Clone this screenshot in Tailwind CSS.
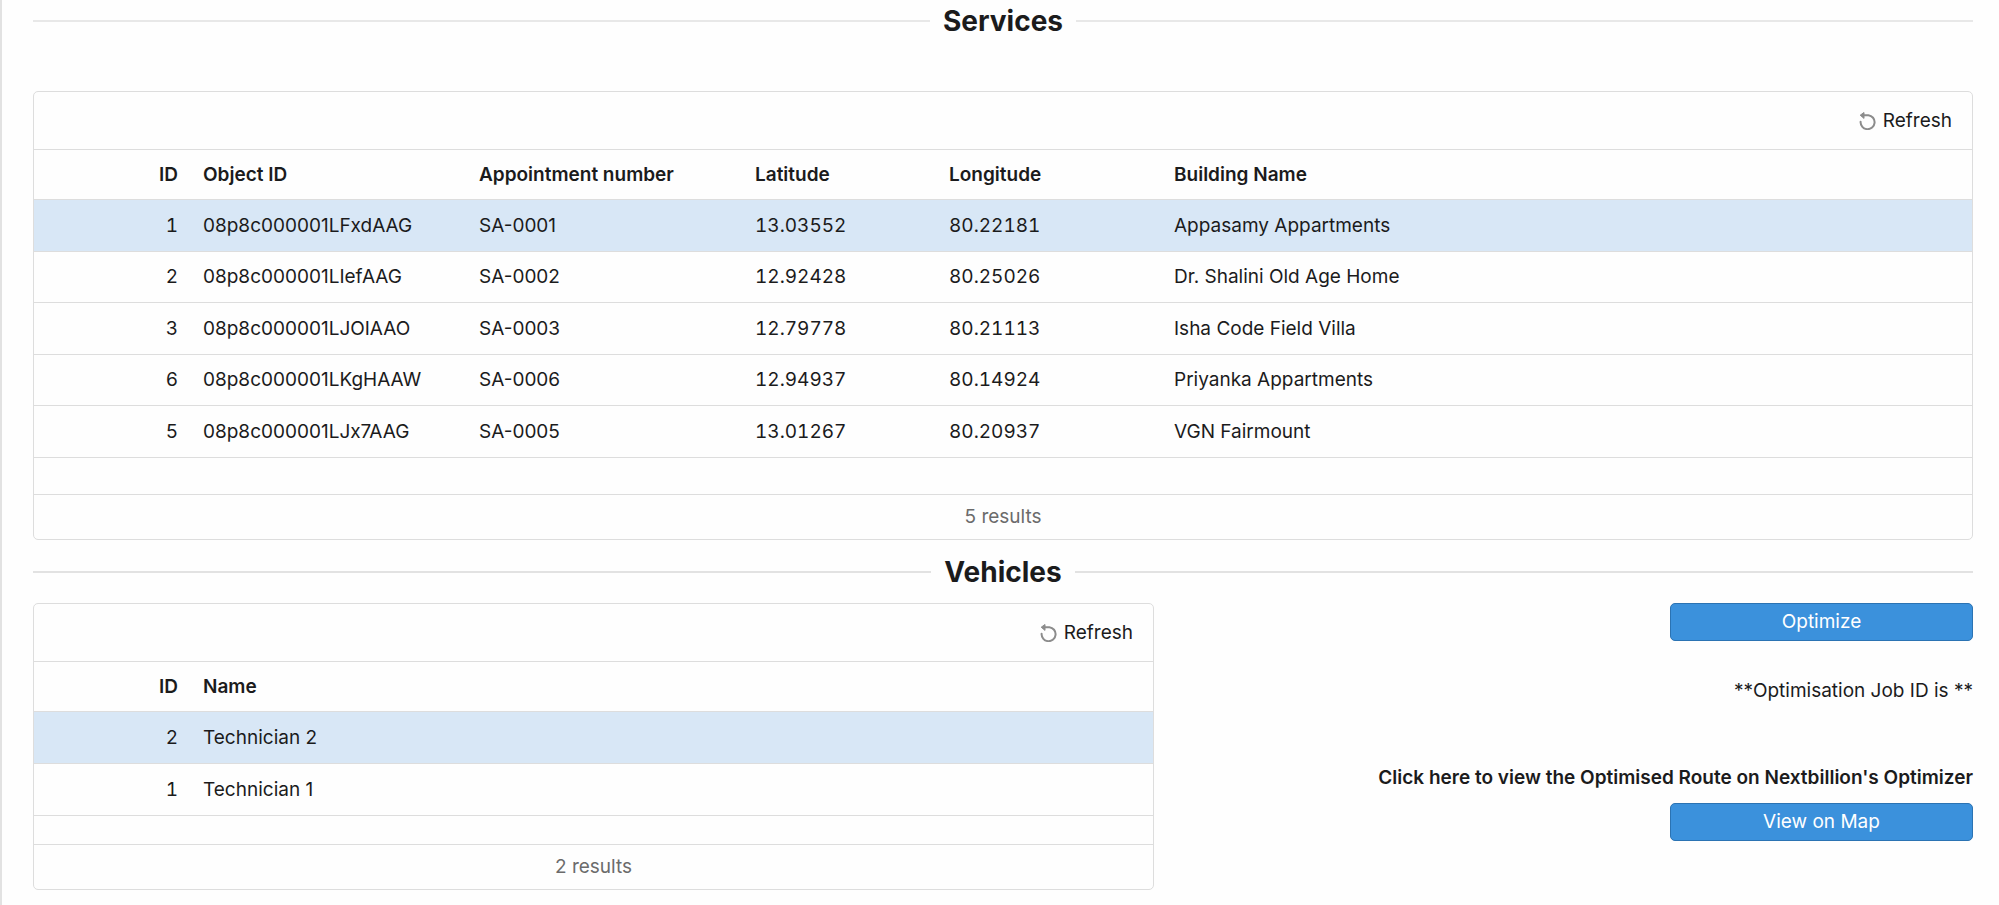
<!DOCTYPE html>
<html lang="en">
<head>
<meta charset="utf-8">
<title>Services and Vehicles</title>
<script src="https://cdn.jsdelivr.net/npm/@tailwindcss/browser@4"></script>
</head>
<body class="min-h-screen border-l-2 border-[#e2e2e2] bg-[#fefefe] pr-[26px] pl-[31px] font-['Inter',sans-serif] text-[19px] leading-6 text-[#1b1b1c]">
<main>
  <div class="flex h-[42px] items-center gap-[13px]">
    <div class="h-0.5 flex-1 bg-[#e8e8e8]"></div>
    <h2 class="text-[28px] leading-8 font-bold">Services</h2>
    <div class="h-0.5 flex-1 bg-[#e8e8e8]"></div>
  </div>

  <section aria-label="Services" class="mt-[49px] overflow-hidden rounded-[5px] border border-[#dddddd]">
    <div class="flex h-[57px] items-center justify-end px-5">
      <button type="button" class="flex items-center gap-1.5">
        <svg class="size-[18px] text-[#8c8c8c]" viewBox="0 0 18 18" fill="none" aria-hidden="true"><path d="M4.2 3.2H9.4A7 7 0 1 1 1.6 9.8" stroke="currentColor" stroke-width="2" stroke-linecap="round"/><path d="M1.2 3.2 5 .5V6.4Z" fill="currentColor" stroke="currentColor" stroke-linejoin="round"/></svg>
        Refresh
      </button>
    </div>
    <table class="w-full table-fixed border-y border-[#dddddd] text-left">
      <colgroup><col class="w-[156px]"><col class="w-[276px]"><col class="w-[276px]"><col class="w-[194px]"><col class="w-[225px]"><col></colgroup>
      <thead>
        <tr class="h-[50px] border-b border-[#dddddd]"><th class="px-3 text-right font-semibold">ID</th><th class="px-[13px] font-semibold">Object ID</th><th class="px-[13px] font-semibold">Appointment number</th><th class="px-[13px] font-semibold">Latitude</th><th class="px-[13px] font-semibold">Longitude</th><th class="px-[13px] font-semibold">Building Name</th></tr>
      </thead>
      <tbody>
        <tr class="h-[52px] border-b border-[#dddddd] bg-[#d8e7f6]"><td class="px-3 text-right tabular-nums">1</td><td class="px-[13px]">08p8c000001LFxdAAG</td><td class="px-[13px]">SA-0001</td><td class="px-[13px] tabular-nums">13.03552</td><td class="px-[13px] tabular-nums">80.22181</td><td class="px-[13px]">Appasamy Appartments</td></tr>
        <tr class="h-[51px] border-b border-[#dddddd]"><td class="px-3 text-right tabular-nums">2</td><td class="px-[13px]">08p8c000001LIefAAG</td><td class="px-[13px]">SA-0002</td><td class="px-[13px] tabular-nums">12.92428</td><td class="px-[13px] tabular-nums">80.25026</td><td class="px-[13px]">Dr. Shalini Old Age Home</td></tr>
        <tr class="h-[52px] border-b border-[#dddddd]"><td class="px-3 text-right tabular-nums">3</td><td class="px-[13px]">08p8c000001LJOIAAO</td><td class="px-[13px]">SA-0003</td><td class="px-[13px] tabular-nums">12.79778</td><td class="px-[13px] tabular-nums">80.21113</td><td class="px-[13px]">Isha Code Field Villa</td></tr>
        <tr class="h-[51px] border-b border-[#dddddd]"><td class="px-3 text-right tabular-nums">6</td><td class="px-[13px]">08p8c000001LKgHAAW</td><td class="px-[13px]">SA-0006</td><td class="px-[13px] tabular-nums">12.94937</td><td class="px-[13px] tabular-nums">80.14924</td><td class="px-[13px]">Priyanka Appartments</td></tr>
        <tr class="h-[52px] border-b border-[#dddddd]"><td class="px-3 text-right tabular-nums">5</td><td class="px-[13px]">08p8c000001LJx7AAG</td><td class="px-[13px]">SA-0005</td><td class="px-[13px] tabular-nums">13.01267</td><td class="px-[13px] tabular-nums">80.20937</td><td class="px-[13px]">VGN Fairmount</td></tr>
      </tbody>
    </table>
    <div class="mt-9 flex h-[45px] items-center justify-center border-t border-[#dddddd] text-[#6b6b6b]">5 results</div>
  </section>

  <div class="flex h-[63px] items-center gap-[13px]">
    <div class="h-0.5 flex-1 bg-[#e2e2e2]"></div>
    <h2 class="text-[28px] leading-8 font-bold">Vehicles</h2>
    <div class="h-0.5 flex-1 bg-[#e2e2e2]"></div>
  </div>

  <div class="flex items-start justify-between">
    <section aria-label="Vehicles" class="w-[1121px] overflow-hidden rounded-[5px] border border-[#dddddd]">
      <div class="flex h-[57px] items-center justify-end px-5">
        <button type="button" class="flex items-center gap-1.5">
          <svg class="size-[18px] text-[#8c8c8c]" viewBox="0 0 18 18" fill="none" aria-hidden="true"><path d="M4.2 3.2H9.4A7 7 0 1 1 1.6 9.8" stroke="currentColor" stroke-width="2" stroke-linecap="round"/><path d="M1.2 3.2 5 .5V6.4Z" fill="currentColor" stroke="currentColor" stroke-linejoin="round"/></svg>
          Refresh
        </button>
      </div>
      <table class="w-full table-fixed border-y border-[#dddddd] text-left">
        <colgroup><col class="w-[156px]"><col></colgroup>
        <thead>
          <tr class="h-[50px] border-b border-[#dddddd]"><th class="px-3 text-right font-semibold">ID</th><th class="px-[13px] font-semibold">Name</th></tr>
        </thead>
        <tbody>
          <tr class="h-[52px] border-b border-[#dddddd] bg-[#d8e7f6]"><td class="px-3 text-right tabular-nums">2</td><td class="px-[13px]">Technician 2</td></tr>
          <tr class="h-[52px] border-b border-[#dddddd]"><td class="px-3 text-right tabular-nums">1</td><td class="px-[13px]">Technician 1</td></tr>
        </tbody>
      </table>
      <div class="mt-7 flex h-[45px] items-center justify-center border-t border-[#dddddd] text-[#6b6b6b]">2 results</div>
    </section>

    <aside class="flex flex-col items-end">
      <button type="button" class="h-[38px] w-[303px] rounded-[5px] border border-[#2b73b3] bg-[#3b91dc] text-white">Optimize</button>
      <p class="mt-[38px]">**Optimisation Job ID is **</p>
      <p class="mt-[63px] font-semibold">Click here to view the Optimised Route on Nextbillion's Optimizer</p>
      <button type="button" class="mt-[13px] h-[38px] w-[303px] rounded-[5px] border border-[#2b73b3] bg-[#3b91dc] text-white">View on Map</button>
    </aside>
  </div>
</main>
</body>
</html>
